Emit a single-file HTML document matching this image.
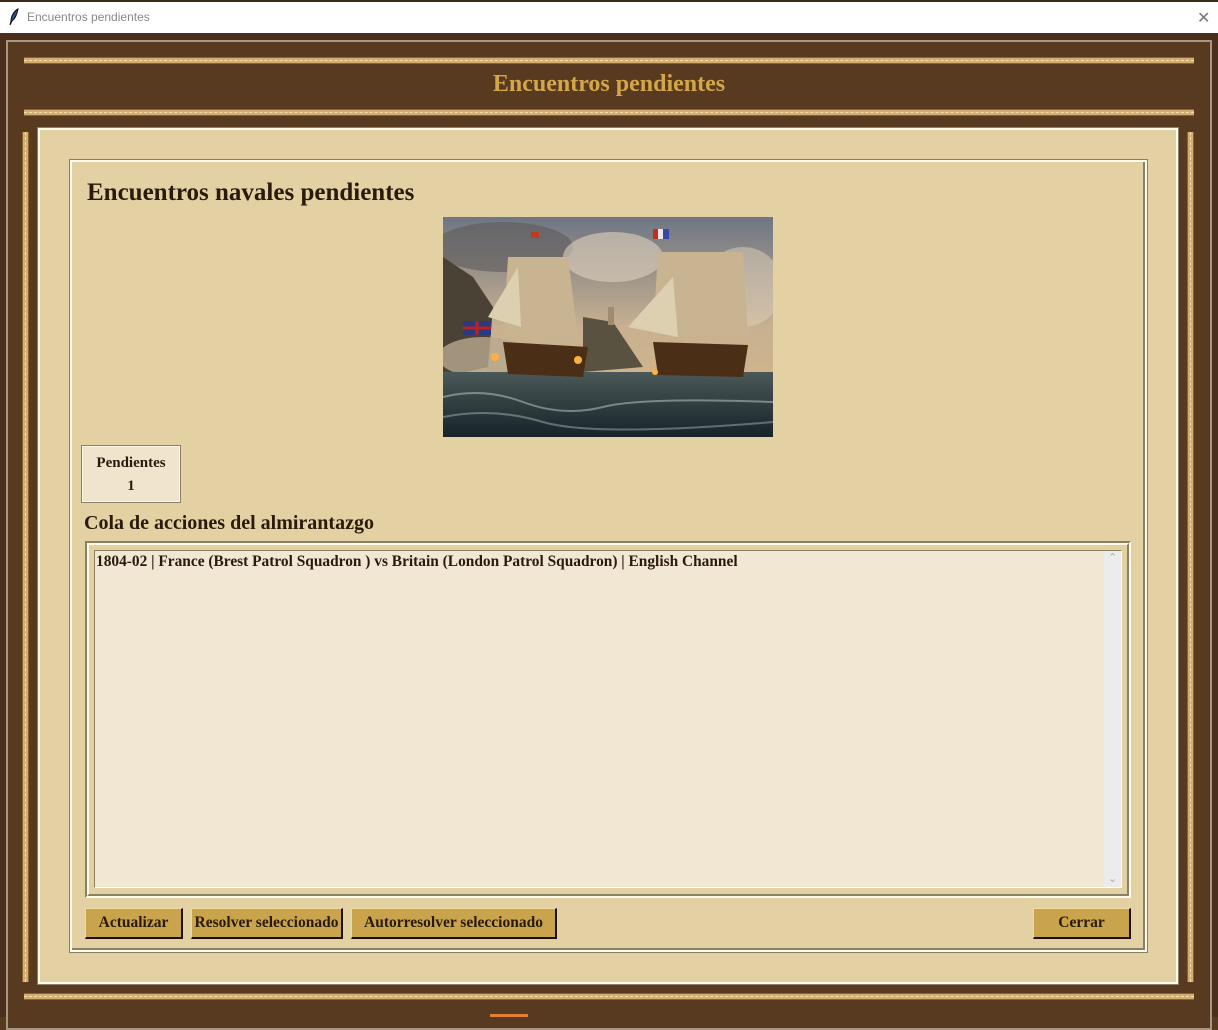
<!DOCTYPE html>
<html><head><meta charset="utf-8"><style>
*{margin:0;padding:0;box-sizing:border-box}
body{width:1218px;height:1017px;overflow:hidden;background:#573a20;position:relative;font-family:"Liberation Serif",serif;color:#2a1a0c}
.a{position:absolute}
.rail{position:absolute;background:#d4ae70;border-top:1px solid #8a6430;border-bottom:1px solid #8a6430}
.rail:after{content:"";position:absolute;left:0;right:0;top:2px;border-top:1px dashed #f3dcb0}
.vrail{position:absolute;background:#d4ae70;border-left:1px solid #8a6430;border-right:1px solid #8a6430}
.vrail:after{content:"";position:absolute;top:0;bottom:0;left:2px;border-left:1px dashed #f3dcb0}
.btn{position:absolute;top:908px;height:31px;background:#c9a44c;border-top:1px solid #f0dca0;border-left:1px solid #f0dca0;border-right:2px solid #1a1008;border-bottom:2px solid #1a1008;font-weight:bold;font-size:15.5px;text-align:center;line-height:28px;color:#2a1a0c;white-space:nowrap}
</style></head><body>
<div class="a" style="left:0;top:0;width:1218px;height:2px;background:#3a2a1a"></div>
<div class="a" style="left:0;top:2px;width:1218px;height:31px;background:#fff"></div>
<svg class="a" style="left:8px;top:8px" width="12" height="18" viewBox="0 0 12 18"><path d="M10 1 C6 3 3 8 3 13 L2 17 L4 13 C7 11 9 6 10 1Z" fill="#2a4a8a" stroke="#111" stroke-width="1"/></svg>
<div class="a" style="left:27px;top:10px;font-family:'Liberation Sans',sans-serif;font-size:12px;color:#888">Encuentros pendientes</div>
<div class="a" style="left:1197px;top:8px;font-family:'Liberation Sans',sans-serif;font-size:16px;color:#777">✕</div>
<div class="a" style="left:0;top:33px;width:1218px;height:984px;background:#4a2f1c"></div>
<div class="a" style="left:6px;top:40px;width:1206px;height:990px;border:2px solid #a89680;background:#573a20"></div>
<div class="rail" style="left:24px;top:57px;width:1170px;height:7px"></div>
<div class="rail" style="left:24px;top:109px;width:1170px;height:7px"></div>
<div class="rail" style="left:24px;top:993px;width:1170px;height:7px"></div>
<div class="vrail" style="left:22px;top:132px;width:7px;height:850px"></div>
<div class="vrail" style="left:1187px;top:132px;width:7px;height:850px"></div>
<div class="a" style="left:0;top:71px;width:1218px;text-align:center;font-size:24px;font-weight:bold;color:#d4a64a">Encuentros pendientes</div>
<div class="a" style="left:38px;top:128px;width:1140px;height:856px;background:#e4d1a3;border:2px solid #fffbe8;outline:1px solid #8a8066"></div>
<div class="a" style="left:70px;top:160px;width:1077px;height:792px;border:2px solid #fffbe8;outline:1px solid #8a8066;outline-offset:0"></div>
<div class="a" style="left:72px;top:162px;width:1073px;height:788px;border-right:2px solid #8a8066;border-bottom:2px solid #8a8066"></div>
<div class="a" style="left:87px;top:179px;font-size:25px;font-weight:bold">Encuentros navales pendientes</div>
<svg class="a" style="left:443px;top:217px" width="330" height="220" viewBox="0 0 330 220">
<defs><linearGradient id="sky" x1="0" y1="0" x2="0" y2="1"><stop offset="0" stop-color="#6e7684"/><stop offset=".5" stop-color="#c8b090"/><stop offset="1" stop-color="#d8b888"/></linearGradient>
<linearGradient id="sea" x1="0" y1="0" x2="0" y2="1"><stop offset="0" stop-color="#4a5858"/><stop offset="1" stop-color="#16242a"/></linearGradient></defs>
<rect width="330" height="220" fill="url(#sky)"/>
<ellipse cx="60" cy="30" rx="70" ry="25" fill="#5e5a5a" opacity=".6"/>
<ellipse cx="170" cy="40" rx="50" ry="25" fill="#e0d2bc" opacity=".6"/>
<ellipse cx="300" cy="70" rx="40" ry="40" fill="#e0d2bc" opacity=".5"/>
<path d="M0 40 L30 60 L50 90 L45 150 L0 160Z" fill="#4a4234"/>
<path d="M140 100 L170 105 L200 150 L140 155Z" fill="#5a5240"/>
<rect x="165" y="90" width="6" height="18" fill="#a08a70"/>
<ellipse cx="40" cy="140" rx="45" ry="20" fill="#b8a890" opacity=".8"/>
<rect y="155" width="330" height="65" fill="url(#sea)"/>
<path d="M0 180 Q40 170 80 185 T160 190 T330 185" stroke="#c8d0c8" stroke-width="2" fill="none" opacity=".5"/>
<path d="M0 200 Q50 190 100 205 T330 205" stroke="#c8d0c8" stroke-width="2" fill="none" opacity=".4"/>
<path d="M60 125 L145 130 L140 160 L65 157Z" fill="#4a2e16"/>
<path d="M65 40 L125 40 L135 120 L60 120Z" fill="#c8b490"/>
<path d="M45 100 L75 50 L78 110Z" fill="#ddd0b0"/>
<path d="M210 125 L305 128 L300 160 L215 158Z" fill="#4a2e16"/>
<path d="M215 35 L300 35 L305 118 L210 118Z" fill="#c8b490"/>
<path d="M185 110 L230 60 L235 120Z" fill="#ddd0b0"/>
<rect x="88" y="15" width="8" height="6" fill="#c03a20"/>
<rect x="210" y="12" width="16" height="10" fill="#3a4aa0"/><rect x="210" y="12" width="10" height="10" fill="#e8e8e8"/><rect x="210" y="12" width="5" height="10" fill="#c03020"/>
<rect x="20" y="104" width="28" height="14" fill="#2a3a80"/><path d="M20 111 H48 M34 104 V118" stroke="#c02020" stroke-width="3"/>
<circle cx="52" cy="140" r="4" fill="#ffb040"/><circle cx="135" cy="143" r="4" fill="#ffb040"/><circle cx="212" cy="155" r="3" fill="#ffb040"/>
</svg>
<div class="a" style="left:82px;top:446px;width:98px;height:56px;background:#f0e4cc;border:1px solid #fffbe8;outline:1px solid #8a8066;text-align:center;font-weight:bold;font-size:15px;line-height:23px;padding-top:5px">Pendientes<br>1</div>
<div class="a" style="left:84px;top:512px;font-size:20px;font-weight:bold">Cola de acciones del almirantazgo</div>
<div class="a" style="left:85px;top:541px;width:1046px;height:357px;border:2px solid #8a8066;border-right-color:#fffbe8;border-bottom-color:#fffbe8;background:#e4d1a3"></div>
<div class="a" style="left:87px;top:543px;width:1042px;height:353px;border:2px solid #fffbe8;border-right-color:#8a8066;border-bottom-color:#8a8066"></div>
<div class="a" style="left:94px;top:550px;width:1028px;height:338px;background:#f2e7d2;border:1px solid #8a8066;border-right-color:#fff;border-bottom-color:#fff"></div>
<div class="a" style="left:1104px;top:551px;width:17px;height:336px;background:#ececec"></div>
<div class="a" style="left:1108px;top:551px;font-size:11px;color:#aaa;font-family:'DejaVu Sans',sans-serif">⌃</div>
<div class="a" style="left:1108px;top:872px;font-size:11px;color:#aaa;font-family:'DejaVu Sans',sans-serif">⌄</div>
<div class="a" style="left:96px;top:553px;font-size:15.4px;font-weight:bold;white-space:nowrap">1804-02 | France (Brest Patrol Squadron ) vs Britain (London Patrol Squadron) | English Channel</div>
<div class="btn" style="left:85px;width:98px">Actualizar</div>
<div class="btn" style="left:191px;width:152px">Resolver seleccionado</div>
<div class="btn" style="left:351px;width:206px">Autorresolver seleccionado</div>
<div class="btn" style="left:1033px;width:98px">Cerrar</div>
<div class="a" style="left:490px;top:1014px;width:38px;height:3px;background:#e08030"></div>
</body></html>
